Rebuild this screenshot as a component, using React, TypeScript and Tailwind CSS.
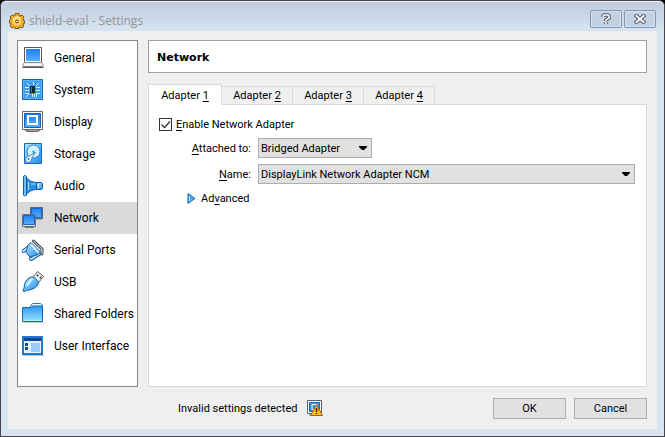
import React, { useState } from "react";

type IconProps = { id: string };

function SectionIcon({ id }: IconProps) {
  return (
    <svg viewBox="0 0 22 22" className="h-[22px] w-[22px] shrink-0" aria-hidden="true">
      <defs>
        <linearGradient id={`${id}-blue`} x1="0" y1="0" x2="0" y2="1">
          <stop offset="0" stopColor="#1f7ff0" />
          <stop offset="1" stopColor="#55b0ff" />
        </linearGradient>
        <linearGradient id={`${id}-light`} x1="0" y1="0" x2="1" y2="1">
          <stop offset="0" stopColor="#b5e6ff" />
          <stop offset="1" stopColor="#2089e8" />
        </linearGradient>
        <linearGradient id={`${id}-folder`} x1="0" y1="0" x2="0" y2="1">
          <stop offset="0" stopColor="#2d96ef" />
          <stop offset="1" stopColor="#9ae4ff" />
        </linearGradient>
      </defs>
      {sectionArt(id)}
    </svg>
  );
}

function sectionArt(id: string) {
  const blue = `url(#${id}-blue)`;
  const light = `url(#${id}-light)`;
  switch (id) {
    case "general":
      return (
        <g>
          <path d="M2.500.5h17v15h-17z" fill="#fff" stroke="#565a60" />
          <path d="M4 2h14v12H4z" fill={blue} />
          <path d="M2.500 15.500h17l1.500 2v2H1v-2z" fill="#eee" stroke="#888" />
          <path d="M2 17.500h18" stroke="#fff" />
          <path d="M.5 20.500h21" stroke="#565656" />
        </g>
      );
    case "system":
      return (
        <g>
          <path d="M.5.5h20v20H.5z" fill="#3f9df0" stroke="#1365bd" />
          <path d="M1.500 1.500h18v18h-18z" fill="none" stroke="#58b5fa" />
          <path
            d="M11.500 3v3M5 4l3 3M17 4l-3 3M3 8.500h4M3 11.500h4M3 14.500h4M14 8.500h4M14 11.500h4M14 14.500h4M4 18l3-3M10.500 15v3M12.500 15v3M14.500 15v3"
            stroke="#d5f0ff"
          />
          <path d="M8 7h5v7H8z" fill="#1d252c" />
          <path d="M9 8h1v5H9z" fill="#68747e" />
        </g>
      );
    case "display":
      return (
        <g>
          <path d="M.5.5h20v18H.5z" fill="#fff" stroke="#666" />
          <path d="M2.500 2.500h16v14h-16z" fill={blue} stroke="#125fc0" />
          <path d="M6 5h9v8H6z" fill="none" stroke="#fff" strokeWidth="2" />
          <path d="M3 19h15l-2 1.500H5z" fill="#e8e8e8" stroke="#666" />
        </g>
      );
    case "storage":
      return (
        <g>
          <path d="M2.500.5h17v20h-17z" fill={light} stroke="#1268bd" />
          <circle cx="11.500" cy="8.500" r="6.500" fill="#d5f0ff" stroke="#318bd5" />
          <circle cx="11.500" cy="8.500" r="2" fill="#66b5ee" stroke="#fff" />
          <path d="M4.500 18.500c-2-3 0-5 3-5.500l6-4-4 6.500c0 3-3 5-5 3z" fill="#fff" stroke="#3787c5" />
          <circle cx="6.500" cy="16" r="1" fill="#1b77c7" />
        </g>
      );
    case "audio":
      return (
        <g>
          <path d="M14.500 7.500h5l1 1v5l-1 1h-5z" fill={light} stroke="#175e9b" />
          <path d="M4.500 2.500C6 5 10 7.500 14.500 7.500v7C10 14.500 6 17 4.500 19.500z" fill="#2b91e8" stroke="#125ba8" />
          <path d="M1.500 1.500l1-1h1l1 1v18.500l-1 1h-1l-1-1z" fill="#70bff7" stroke="#125ba8" />
          <path d="M6.500 7v8M9 9h5" stroke="#a9dcff" />
          <path d="M16.500 9v4" stroke="#cdefff" />
        </g>
      );
    case "network":
      return (
        <g>
          <path d="M8.500.5h12v11h-12z" fill={blue} stroke="#5d6878" />
          <path d="M9.500 1.500h10v9h-10z" fill="none" stroke="#1768c5" />
          <path d="M12 12.500h8" stroke="#b0b0b0" />
          <path d="M.5 7.500h13v12H.5z" fill="#e3e7eb" stroke="#69717c" />
          <path d="M1.500 8.500h11v9h-11z" fill={blue} stroke="#1768c5" />
          <path d="M3 20.500h9" stroke="#777" />
        </g>
      );
    case "serial":
      return (
        <g>
          <path d="M1.500 12 7 8M9 20l8-5" stroke="#145ea7" strokeWidth="4" strokeLinecap="round" />
          <path d="M1.500 12 7 8M9 20l8-5" stroke="#c5e6fa" strokeWidth="2" strokeLinecap="round" />
          <path d="m11.500 2 8.500 8v5" fill="none" stroke="#484e55" strokeWidth="3" strokeLinecap="round" strokeLinejoin="round" />
          <path d="m11.500 2 8.500 8v5" fill="none" stroke="#e1e3e6" strokeLinecap="round" />
          <path d="M9 3.500 18.500 13 16 15.500 8 18l-4-4.500 2-7.500z" fill={light} stroke="#145ea7" strokeLinejoin="round" />
          <path d="m9.500 6 6.500 7" stroke="#d2f2ff" strokeWidth="2" strokeLinecap="round" />
        </g>
      );
    case "usb":
      return (
        <g>
          <path d="m15.500.5 6 5-5 6-6-5z" fill="#eee" stroke="#555" />
          <path d="m15 4 1 1m2 1 1 1" stroke="#333" strokeWidth="2" />
          <path d="M9 6c-3 1-6 4-6.500 8-.5 2 0 3-1.500 5l1 2c1-2 3-1.500 5-2 4-.5 8-3 9.500-6.500.5-2-4-7-7.500-6.500z" fill={light} stroke="#125da6" />
          <path d="m5 14 5-6" stroke="#d5f5ff" strokeWidth="2" strokeLinecap="round" />
        </g>
      );
    case "folders":
      return (
        <g>
          <path d="m8.500 3 2-2.500h8l2 1.500v4h-12z" fill="#e9f8ff" stroke="#2874bb" />
          <path d="M.5 4.500H9L11 3h9.500v15.500H.5z" fill="url(#folders-folder)" stroke="#1168bd" />
          <path d="M1.500 17.500h18" stroke="#b8edff" />
          <path d="M1 19.500h21" stroke="#ccc" />
        </g>
      );
    default:
      return (
        <g>
          <path d="M1 2h19v17H1z" fill="#e4f3ff" stroke="#2378c9" strokeWidth="2" />
          <path d="M2 3h17v3H2z" fill="#0848a2" />
          <path d="M3 8h3v3H3zm0 4h3v3H3z" fill="#124d9b" />
          <path d="M9 8h9v9H9z" fill="#9bcaff" />
          <path d="M1 20.500h21" stroke="#bbb" />
        </g>
      );
  }
}

function GearIcon() {
  return (
    <svg viewBox="0 0 16 16" className="h-4 w-4 shrink-0" aria-hidden="true">
      <path
        d="M6 .5h4v2l1 .5 2-1 2 2-1 2 .5 1.500h1v3h-1L14 12l1 1-2 2-2-1-1 .5v1H6v-1L5 14l-2 1-2-2 1-2-.5-1H.5V7h1L2 5 1 4l2-2 2 1 1-.5z"
        fill="#eeaa26"
        stroke="#93540b"
      />
      <circle cx="8" cy="8" r="4.500" fill="#ffd66b" />
      <path d="M4 7c1-4 6-4 8-1" fill="none" stroke="#fff1b2" />
      <circle cx="8" cy="8.500" r="1.500" fill="#fff4cc" stroke="#704209" />
    </svg>
  );
}

function WarningIcon() {
  return (
    <svg viewBox="0 0 16 16" className="h-4 w-4 shrink-0" role="img" aria-label="Display warning">
      <path d="M.5.5h14v13H.5z" fill="#fff" stroke="#596370" />
      <path d="M2.500 2.500h10v9h-10z" fill="#3296f0" stroke="#1766bd" />
      <path d="M5 4.500h5v5H5z" fill="#3b91e8" stroke="#fff" />
      <path d="M2 15h10" stroke="#888" />
      <path d="m9.500 4.500 6 11h-12z" fill="#ffbd22" stroke="#a75d0b" />
      <path d="M9.500 8v4m0 1v1" stroke="#402000" strokeWidth="1.500" />
    </svg>
  );
}

const sections = [
  ["general", "General"],
  ["system", "System"],
  ["display", "Display"],
  ["storage", "Storage"],
  ["audio", "Audio"],
  ["network", "Network"],
  ["serial", "Serial Ports"],
  ["usb", "USB"],
  ["folders", "Shared Folders"],
  ["interface", "User Interface"],
];

function Combo({ id, value, className }: { id: string; value: string; className: string }) {
  return (
    <div className={`relative h-5 ${className}`}>
      <select
        id={id}
        defaultValue={value}
        className="block h-full w-full appearance-none border border-[#adadad] bg-[#e1e1e1] pt-px pr-4 pl-[2px] leading-4"
      >
        <option>{value}</option>
      </select>
      <svg viewBox="0 0 8 4" className="pointer-events-none absolute top-2 right-[5px] h-1 w-2" aria-hidden="true">
        <path d="M0 0h8v1L5 4H3L0 1z" />
      </svg>
    </div>
  );
}

export default function App() {
  const [section, setSection] = useState("network");
  const [tab, setTab] = useState(1);

  return (
    <div className="flex min-h-screen bg-black font-['Roboto',sans-serif] text-[11px] leading-4 text-black">
      <div className="flex flex-1 flex-col rounded-t-md border border-[#48464a] bg-[#d7e4f2] px-[7px] pb-[7px]">
        <header className="-mx-[7px] flex h-[30px] shrink-0 items-center rounded-t-md border-t border-[#e9f0f7] bg-linear-to-b from-[#bfccdb] to-[#d7e4f2] pt-2 pr-2 pl-2">
          <div className="flex flex-1 items-center gap-1">
            <GearIcon />
            <h1 className="font-['Open_Sans',sans-serif] text-xs text-[#929599]">shield-eval - Settings</h1>
          </div>
          <div className="flex gap-[2px] pb-1">
            <button aria-label="Help" className="flex h-[18px] w-8 items-center justify-center rounded-xs border border-[#8495b2] bg-[#c4d1e1] shadow-[inset_0_0_0_1px_#d5e1ee]">
              <svg viewBox="0 0 10 12" className="h-3 w-[10px]" aria-hidden="true">
                <path d="M2 4V3l1-1h4l1 1v2L5 7v1m0 1v2" fill="none" stroke="#555c6b" strokeWidth="3.500" />
                <path d="M2 4V3l1-1h4l1 1v2L5 7v1m0 1v2" fill="none" stroke="#fff" strokeWidth="1.500" />
              </svg>
            </button>
            <button aria-label="Close" className="flex h-[18px] w-8 items-center justify-center rounded-xs border border-[#8495b2] bg-[#c4d1e1] shadow-[inset_0_0_0_1px_#d5e1ee]">
              <svg viewBox="0 0 12 10" className="h-[10px] w-3" aria-hidden="true">
                <path d="m2.500 2 7 6m0-6-7 6" fill="none" stroke="#555c6b" strokeWidth="4" strokeLinecap="square" />
                <path d="m2.500 2 7 6m0-6-7 6" fill="none" stroke="#f6f7f8" strokeWidth="2" strokeLinecap="square" />
              </svg>
            </button>
          </div>
        </header>

        <main className="flex flex-1 flex-col bg-[#efefef] pt-[9px] pr-[10px] pl-[9px]">
          <div className="flex flex-1 gap-[10px]">
            <nav aria-label="Settings sections" className="w-[121px] shrink-0 border border-[#828790] bg-white pt-px text-xs">
              {sections.map(([id, label]) => (
                <button
                  key={id}
                  onClick={() => setSection(id)}
                  aria-current={section === id ? "page" : undefined}
                  className={`flex h-8 w-full items-center gap-[10px] pl-1 text-left whitespace-nowrap ${section === id ? "bg-[#d9d9d9]" : ""}`}
                >
                  <SectionIcon id={id} />
                  {label}
                </button>
              ))}
            </nav>

            <div className="flex min-w-0 flex-1 flex-col">
              <h2 className="flex h-[33px] items-center border border-[#a0a0a0] bg-white px-2 pt-[2px] font-['DejaVu_Sans',sans-serif] text-[11px] font-bold">
                Network
              </h2>
              <div role="tablist" className="mt-[11px] flex h-5 items-end">
                {[1, 2, 3, 4].map((n) => (
                  <button
                    key={n}
                    role="tab"
                    aria-selected={tab === n}
                    onClick={() => setTab(n)}
                    className={`border-t border-r border-[#d9d9d9] pt-px ${tab === n ? "relative z-10 -mb-px h-[21px] border-l bg-white" : "h-[18px]"} ${n === 1 ? "w-[74px]" : "w-[71px]"}`}
                  >
                    Adapter <u className="underline-offset-2">{n}</u>
                  </button>
                ))}
              </div>
              <section role="tabpanel" className="flex-1 border border-[#d9d9d9] bg-white pt-3 pr-[11px] pl-[10px]">
                <label className="flex h-[14px] items-center gap-1">
                  <span className="relative h-[13px] w-[13px]">
                    <input type="checkbox" defaultChecked className="peer block h-full w-full appearance-none border border-[#333] bg-white" />
                    <svg viewBox="0 0 13 13" className="pointer-events-none absolute inset-0 hidden peer-checked:block" aria-hidden="true">
                      <path d="m2.500 6.500 3 3 5.500-6" fill="none" stroke="#333" strokeWidth="1.300" />
                    </svg>
                  </span>
                  <span className="pt-px"><u className="underline-offset-2">E</u>nable Network Adapter</span>
                </label>
                <div className="mt-[7px] grid grid-cols-[92px_1fr] items-center gap-x-[7px] gap-y-[6px]">
                  <label htmlFor="attached" className="pt-[2px] text-right"><u className="underline-offset-2">A</u>ttached to:</label>
                  <Combo id="attached" value="Bridged Adapter" className="w-[114px]" />
                  <label htmlFor="name" className="pt-[2px] text-right"><u className="underline-offset-2">N</u>ame:</label>
                  <Combo id="name" value="DisplayLink Network Adapter NCM" className="w-full" />
                </div>
                <button className="mt-[6px] ml-7 flex items-center gap-[5px]">
                  <svg viewBox="0 0 9 11" className="h-[11px] w-[9px]" aria-hidden="true">
                    <path d="M1 .5 8 5.500 1 10.500z" fill="#49adf2" stroke="#1269b4" />
                    <path d="M2.500 3v5" stroke="#b5e7ff" />
                  </svg>
                  <span className="pt-px">Ad<u className="underline-offset-2">v</u>anced</span>
                </button>
              </section>
            </div>
          </div>

          <footer className="flex h-[42px] shrink-0 items-center">
            <div className="flex flex-1 items-center gap-[10px] pl-[161px]">
              <span className="pt-px">Invalid settings detected</span>
              <WarningIcon />
            </div>
            <div className="flex gap-2">
              <button className="h-[21px] w-[73px] border border-[#adadad] bg-[#e1e1e1] pt-px">OK</button>
              <button className="h-[21px] w-[73px] border border-[#adadad] bg-[#e1e1e1] pt-px">Cancel</button>
            </div>
          </footer>
        </main>
      </div>
    </div>
  );
}
